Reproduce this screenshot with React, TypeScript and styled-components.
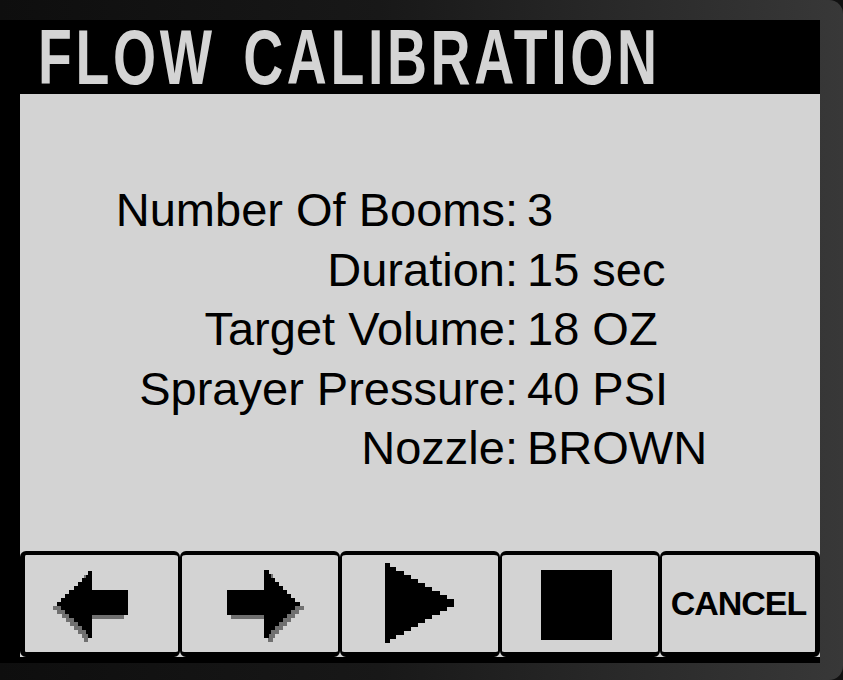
import React from "react";
import styled, { createGlobalStyle } from "styled-components";

const GlobalStyle = createGlobalStyle`
  html, body {
    margin: 0;
    padding: 0;
    background: #111;
  }
`;

// DEVICE FRAME
const Bezel = styled.div`
  width: 843px;
  height: 680px;
  box-sizing: border-box;
  padding: 20px 23px 17px 0;
  background: linear-gradient(90deg, #0e0e0e 0%, #181818 45%, #2a2a2a 75%, #383838 100%);
  border-radius: 0 14px 14px 0;
  overflow: hidden;
`;

const Screen = styled.div`
  height: 100%;
  display: flex;
  flex-direction: column;
  background: #000;
  padding-bottom: 6px;
  box-sizing: border-box;
`;

const Header = styled.div`
  height: 74px;
  flex: none;
  display: flex;
  align-items: center;
  padding-left: 38px;
`;

const Title = styled.h1`
  margin: 0;
  display: inline-block;
  font-family: "Liberation Sans", Arial, sans-serif;
  font-weight: 700;
  font-size: 77px;
  line-height: 1;
  letter-spacing: 5px;
  word-spacing: 12px;
  color: #d4d4d4;
  white-space: nowrap;
  transform: scaleX(0.72);
  transform-origin: left center;
`;

const Body = styled.div`
  flex: 1;
  margin-left: 20px;
  background: #d3d3d3;
  display: flex;
  flex-direction: column;
  padding-top: 86px;
`;

// SETTINGS LIST
const Fields = styled.div`
  display: grid;
  grid-template-columns: 498px 1fr;
  grid-auto-rows: 59.5px;
  column-gap: 9px;
  font-family: "Liberation Sans", Arial, sans-serif;
  font-size: 47px;
  line-height: 59.5px;
  color: #000;
`;

const Label = styled.div`
  text-align: right;
  white-space: nowrap;
`;

const Value = styled.div`
  white-space: nowrap;
`;

// SOFT KEYS
const KeyBar = styled.div`
  margin-top: auto;
  height: 106px;
  display: grid;
  grid-template-columns: repeat(5, 1fr);
`;

const Key = styled.button<{ $first?: boolean; $last?: boolean }>`
  all: unset;
  box-sizing: border-box;
  background: #d3d3d3;
  border-top: 4px solid #000;
  border-bottom: 5px solid #000;
  border-left: ${(p) => (p.$first ? 5 : 2)}px solid #000;
  border-right: ${(p) => (p.$last ? 5 : 2)}px solid #000;
  border-radius: 6px;
  display: flex;
  align-items: center;
  justify-content: center;
  overflow: hidden;

  svg {
    width: 100%;
    height: 100%;
    display: block;
  }
`;

const KeyText = styled.span`
  font-family: "Liberation Sans", Arial, sans-serif;
  font-weight: 700;
  font-size: 34px;
  letter-spacing: -1px;
  color: #000;
`;

// ICONS
type Dir = "left" | "right";

function triRows(tipX: number, baseX: number, cy: number, halfH: number, step: number) {
  const rows: { x: number; y: number; w: number; h: number }[] = [];
  const n = Math.round((halfH * 2) / step);
  const len = Math.abs(baseX - tipX);
  for (let i = 0; i < n; i++) {
    const y = cy - halfH + i * step;
    const mid = y + step / 2;
    const f = 1 - Math.abs(mid - cy) / halfH;
    const ext = Math.max(step, len * f);
    const x = tipX < baseX ? baseX - ext : baseX;
    rows.push({ x, y, w: ext + 0.5, h: step + 0.3 });
  }
  return rows;
}

function ArrowShape({ dir, dx, dy, fill }: { dir: Dir; dx: number; dy: number; fill: string }) {
  const left = dir === "left";
  const head = left ? triRows(33, 68, 49, 34, 4) : triRows(117, 82, 49, 34, 4);
  const shaft = left ? { x: 67, w: 38 } : { x: 45, w: 38 };
  return (
    <g transform={`translate(${dx} ${dy})`} fill={fill}>
      <rect x={shaft.x} y={35} width={shaft.w} height={25} />
      {head.map((r, i) => (
        <rect key={i} x={r.x} y={r.y} width={r.w} height={r.h} />
      ))}
    </g>
  );
}

function Arrow({ dir }: { dir: Dir }) {
  const sx = dir === "left" ? -4 : 4;
  return (
    <svg viewBox="0 0 156 97" shapeRendering="crispEdges">
      <ArrowShape dir={dir} dx={sx} dy={4} fill="#707070" />
      <ArrowShape dir={dir} dx={0} dy={0} fill="#000" />
    </svg>
  );
}

function Play() {
  const rows = triRows(115, 43, 48, 40, 4);
  return (
    <svg viewBox="0 0 156 97" shapeRendering="crispEdges">
      {rows.map((r, i) => (
        <rect key={i} x={r.x} y={r.y} width={r.w} height={r.h} fill="#000" />
      ))}
    </svg>
  );
}

function Stop() {
  return (
    <svg viewBox="0 0 156 97" shapeRendering="crispEdges">
      <rect x={39} y={15} width={71} height={70} fill="#000" />
    </svg>
  );
}

const settings = [
  { label: "Number Of Booms:", value: "3" },
  { label: "Duration:", value: "15 sec" },
  { label: "Target Volume:", value: "18 OZ" },
  { label: "Sprayer Pressure:", value: "40 PSI" },
  { label: "Nozzle:", value: "BROWN" },
];

export default function App() {
  return (
    <>
      <GlobalStyle />
      <Bezel>
        <Screen>
          <Header>
            <Title>FLOW CALIBRATION</Title>
          </Header>
          <Body>
            <Fields>
              {settings.map((s) => (
                <React.Fragment key={s.label}>
                  <Label>{s.label}</Label>
                  <Value>{s.value}</Value>
                </React.Fragment>
              ))}
            </Fields>
            <KeyBar>
              <Key $first>
                <Arrow dir="left" />
              </Key>
              <Key>
                <Arrow dir="right" />
              </Key>
              <Key>
                <Play />
              </Key>
              <Key>
                <Stop />
              </Key>
              <Key $last>
                <KeyText>CANCEL</KeyText>
              </Key>
            </KeyBar>
          </Body>
        </Screen>
      </Bezel>
    </>
  );
}
